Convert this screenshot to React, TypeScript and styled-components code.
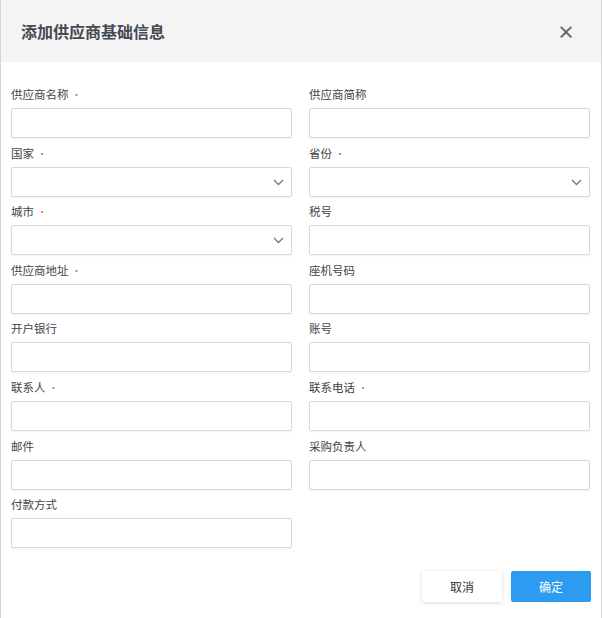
import React from "react";
import styled, { createGlobalStyle } from "styled-components";

const Global = createGlobalStyle`
  body { margin: 0; font-family: "Noto Sans CJK SC", "Liberation Sans", sans-serif; background: #fff; }
`;

const Dialog = styled.div`
  width: 600px;
  height: 618px;
  border-left: 1px solid #d6d6d6;
  border-right: 1px solid #d6d6d6;
  background: #fff;
  display: flex;
  flex-direction: column;
`;

const Header = styled.div`
  height: 62px;
  background: #f4f4f4;
  display: flex;
  align-items: center;
  justify-content: space-between;
  padding: 0 26px 0 20px;
`;

const Title = styled.h1`
  margin: 0;
  font-size: 16px;
  font-weight: 700;
  color: #444a52;
`;

const Close = styled.span`
  font-size: 18px;
  font-weight: 700;
  color: #666;
  line-height: 1;
`;

const Form = styled.div`
  display: grid;
  grid-template-columns: 281px 281px;
  column-gap: 17px;
  row-gap: 6.6px;
  padding: 24px 10px 0 10px;
`;

const Field = styled.div`
  display: flex;
  flex-direction: column;
`;

const Label = styled.label`
  font-size: 11.5px;
  color: #444;
  height: 16px;
  line-height: 16px;
  margin-bottom: 6px;
`;

const Star = styled.span`
  color: #e76a6a;
  margin-left: 3px;
  font-size: 10px;
`;

const Box = styled.div`
  position: relative;
  height: 30px;
  border: 1px solid #d9d9d9;
  border-radius: 2px;
  box-sizing: border-box;
  box-shadow: 0 1px 2px rgba(0,0,0,0.06);
`;

const Chevron = styled.svg`
  position: absolute;
  right: 7px;
  top: 10px;
`;

const Footer = styled.div`
  display: flex;
  justify-content: flex-end;
  gap: 9px;
  padding: 23px 10px 0 0;
`;

const Button = styled.button<{ $primary?: boolean }>`
  width: 80px;
  height: 31px;
  border: none;
  border-radius: 2px;
  font-family: inherit;
  font-size: 12px;
  background: ${(p) => (p.$primary ? "#2d9bf0" : "#fff")};
  color: ${(p) => (p.$primary ? "#fff" : "#333")};
  box-shadow: ${(p) => (p.$primary ? "none" : "0 1px 4px rgba(0,0,0,0.15)")};
`;

const fields: [string, boolean, boolean][] = [
  ["供应商名称", true, false],
  ["供应商简称", false, false],
  ["国家", true, true],
  ["省份", true, true],
  ["城市", true, true],
  ["税号", false, false],
  ["供应商地址", true, false],
  ["座机号码", false, false],
  ["开户银行", false, false],
  ["账号", false, false],
  ["联系人", true, false],
  ["联系电话", true, false],
  ["邮件", false, false],
  ["采购负责人", false, false],
  ["付款方式", false, false],
];

export default function App() {
  return (
    <Dialog>
      <Global />
      <Header>
        <Title>添加供应商基础信息</Title>
        <Close>×</Close>
      </Header>
      <Form>
        {fields.map(([label, req, select]) => (
          <Field key={label}>
            <Label>
              {label}
              {req && <Star>•</Star>}
            </Label>
            <Box>
              {select && (
                <Chevron width="11" height="8" viewBox="0 0 11 8">
                  <path d="M1 2l4.5 4.5L10 2" fill="none" stroke="#777" strokeWidth="1.3" />
                </Chevron>
              )}
            </Box>
          </Field>
        ))}
      </Form>
      <Footer>
        <Button>取消</Button>
        <Button $primary>确定</Button>
      </Footer>
    </Dialog>
  );
}
